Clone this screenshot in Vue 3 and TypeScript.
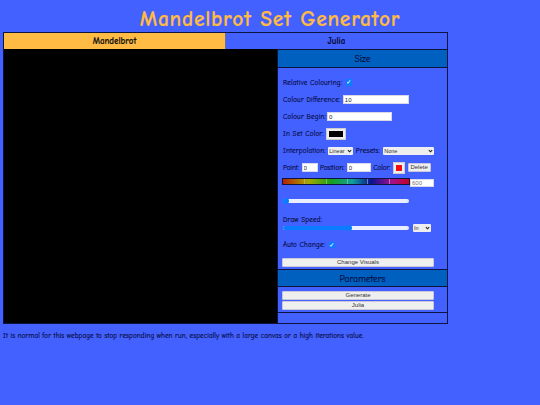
<script setup lang="ts">
const marks: number[] = [17, 34, 51, 67, 84]
</script>

<template>
  <div class="page">
    <h1 class="title">Mandelbrot Set Generator</h1>
    <div class="frame">
      <div class="tabs">
        <div class="tab active">Mandelbrot</div>
        <div class="tab">Julia</div>
      </div>
      <div class="body">
        <div class="canvas"></div>
        <div class="panel">
          <div class="head">Size</div>
          <div class="controls">
            <div class="row r1">Relative Colouring: <span class="check">✓</span></div>
            <div class="row">Colour Difference: <input class="txt w66" value="10" /></div>
            <div class="row">Colour Begin: <input class="txt w66 tight" value="0" /></div>
            <div class="row">In Set Color: <span class="swatch black"><i></i></span></div>
            <div class="row">
              Interpolation:
              <span class="selbox s1">Linear<svg viewBox="0 0 6 4"><path d="M1 1l2 2 2-2" /></svg></span>
              Presets:
              <span class="selbox s2">None<svg viewBox="0 0 6 4"><path d="M1 1l2 2 2-2" /></svg></span>
            </div>
            <div class="row pointrow">
              Point: <input class="txt w16" value="0" />
              Position: <input class="txt w24" value="0" />
              Color: <span class="swatch red"><i></i></span>
              <button class="btn del">Delete</button>
            </div>
            <div class="gradrow">
              <div class="grad">
                <b v-for="m in marks" :key="m" class="mark" :style="{ left: m + '%' }"></b>
              </div>
              <input class="txt num" value="600" />
            </div>
            <div class="track first"><span class="thumb"></span></div>
            <div class="speedlabel">Draw Speed:</div>
            <div class="speedrow">
              <div class="track"><span class="fill" style="width: 52%"></span><span class="thumb"></span></div>
              <span class="selbox s3">In<svg viewBox="0 0 6 4"><path d="M1 1l2 2 2-2" /></svg></span>
            </div>
            <div class="row auto">Auto Change: <span class="check">✓</span></div>
            <button class="btn wide change">Change Visuals</button>
          </div>
          <div class="head params">Parameters</div>
          <div class="actions">
            <button class="btn wide">Generate</button>
            <button class="btn wide">Julia</button>
          </div>
          <div class="tail"></div>
        </div>
      </div>
    </div>
    <p class="note">It is normal for this webpage to stop responding when run, especially with a large canvas or a high iterations value.</p>
  </div>
</template>

<style>
html, body { margin: 0; background: #4361ff; }
</style>

<style scoped>
.page {
  width: 540px;
  height: 405px;
  overflow: hidden;
  background: #4361ff;
  font-family: "Comic Sans MS", "Comic Neue", "Lato", sans-serif;
  color: #040838;
  font-size: 7px;
  -webkit-text-stroke: 0.15px currentColor;
}
.title {
  margin: 0;
  height: 32px;
  padding-top: 7px;
  box-sizing: border-box;
  line-height: 24px;
  text-align: center;
  font-size: 21.5px;
  font-weight: 700;
  letter-spacing: 0.75px;
  color: #ffbb44;
}
.frame {
  margin-left: 3px;
  width: 445px;
  box-sizing: border-box;
  border: 1px solid #0d1440;
}
.tabs { display: flex; height: 16px; }
.tab {
  flex: 1;
  text-align: center;
  line-height: 17px;
  font-size: 9px;
  font-weight: 700;
  color: #050a30;
}
.tab.active { background: #ffbb44; flex: 0 0 222px; box-sizing: border-box; color: #111; border-right: 1px solid #6a70a0; }
.body { display: flex; height: 274px; }
.canvas { flex: 0 0 273px; background: #000; }
.panel {
  flex: 1;
  min-width: 0;
  display: flex;
  flex-direction: column;
  border-left: 1px solid #0d1440;
  border-top: 1px solid #0d1440;
}
.head {
  height: 17px;
  background: #0060c0;
  border-bottom: 1px solid #0d1440;
  text-align: center;
  line-height: 18px;
  font-size: 9.5px;
  color: #040838;
}
.params { border-top: 1px solid #0d1440; height: 16px; }
.controls { height: 201px; padding: 0 4px 0 5px; box-sizing: border-box; }
.row {
  height: 17px;
  display: flex;
  align-items: center;
  gap: 2.5px;
  white-space: nowrap;
  letter-spacing: 0.22px;
}
.pointrow { letter-spacing: 0; }
.r1 { margin-top: 6px; }
.check {
  width: 6.5px;
  height: 6.5px;
  margin-left: 1px;
  border-radius: 1px;
  background: #0a7cff;
  color: #fff;
  font-size: 6px;
  font-weight: 700;
  line-height: 6.5px;
  text-align: center;
  font-family: "DejaVu Sans", sans-serif;
}
.txt {
  box-sizing: border-box;
  height: 9px;
  padding: 0 1px;
  border: 1px solid #d8d8e8;
  border-radius: 0;
  background: #fff;
  font-family: "Liberation Sans", sans-serif;
  font-size: 6px;
  color: #222;
  outline: none;
  -webkit-text-stroke: 0;
}
.w66 { width: 66px; }
.tight { margin-left: -1.5px; width: 65px; }
.w16 { width: 16px; }
.w24 { width: 24px; }
.swatch {
  box-sizing: border-box;
  width: 20px;
  height: 12px;
  padding: 2px;
  background: #eee;
  border: 1px solid #ccc;
  display: inline-block;
}
.swatch i { display: block; height: 100%; }
.black i { background: #000; }
.red { width: 12px; }
.red i { background: #f01010; }
.selbox {
  box-sizing: border-box;
  height: 8px;
  padding: 0 1px;
  border-radius: 1px;
  background: #eee;
  font-family: "Liberation Sans", sans-serif;
  font-size: 5.5px;
  letter-spacing: 0;
  line-height: 8px;
  color: #333;
  display: inline-flex;
  align-items: center;
  justify-content: space-between;
  -webkit-text-stroke: 0;
}
.selbox svg { width: 5px; height: 4px; fill: none; stroke: #222; stroke-width: 1.3; }
.s1 { width: 25px; }
.s2 { width: 51px; margin-left: 0.5px; }
.s3 { width: 18px; }
.btn {
  box-sizing: border-box;
  padding: 0;
  border: 1px solid #c8c8d8;
  border-radius: 1px;
  background: #efefef;
  font-family: "Liberation Sans", sans-serif;
  font-size: 6px;
  line-height: 7px;
  color: #333;
  -webkit-text-stroke: 0;
}
.del { width: 23px; height: 9px; }
.wide { display: block; width: 152px; height: 9px; }
.controls .wide { margin-left: -1px; }
.gradrow { display: flex; align-items: flex-start; height: 23px; margin: 0 0 0 -1px; }
.grad {
  position: relative;
  width: 126px;
  height: 5px;
  border: 1px solid #0d1440;
  margin-top: 2px;
  background: linear-gradient(90deg, #b82000 0%, #a8a800 20%, #18a018 38%, #10a0a0 55%, #0a1090 70%, #a01090 86%, #c80020 100%);
}
.mark { position: absolute; top: 0; width: 1px; height: 100%; background: rgba(200, 200, 180, 0.55); }
.num { width: 24px; height: 8px; margin-top: 3px; color: #777; }
.track {
  position: relative;
  width: 126px;
  height: 3.5px;
  border-radius: 2px;
  background: #e9eeff;
}
.fill { position: absolute; left: 0; top: 0; height: 100%; background: #0a7cff; border-radius: 2px; }
.thumb {
  position: absolute;
  left: 0;
  top: -1.25px;
  width: 6px;
  height: 6px;
  border-radius: 50%;
  background: #0a7cff;
}
.speedrow .thumb { left: calc(52% - 3px); }
.speedlabel { margin-top: 13px; height: 8px; line-height: 8px; letter-spacing: 0.22px; }
.speedrow { display: flex; align-items: center; gap: 4px; height: 9px; }
.auto { margin-top: 4px; }
.change { margin-top: 4px; }
.actions { display: flex; flex-direction: column; gap: 1px; padding: 4px 4px 2px; border-bottom: 1px solid #0d1440; }
.tail { flex: 1; }
.note { margin: 8px 0 0 3px; font-size: 7px; letter-spacing: 0.14px; white-space: nowrap; }
</style>
